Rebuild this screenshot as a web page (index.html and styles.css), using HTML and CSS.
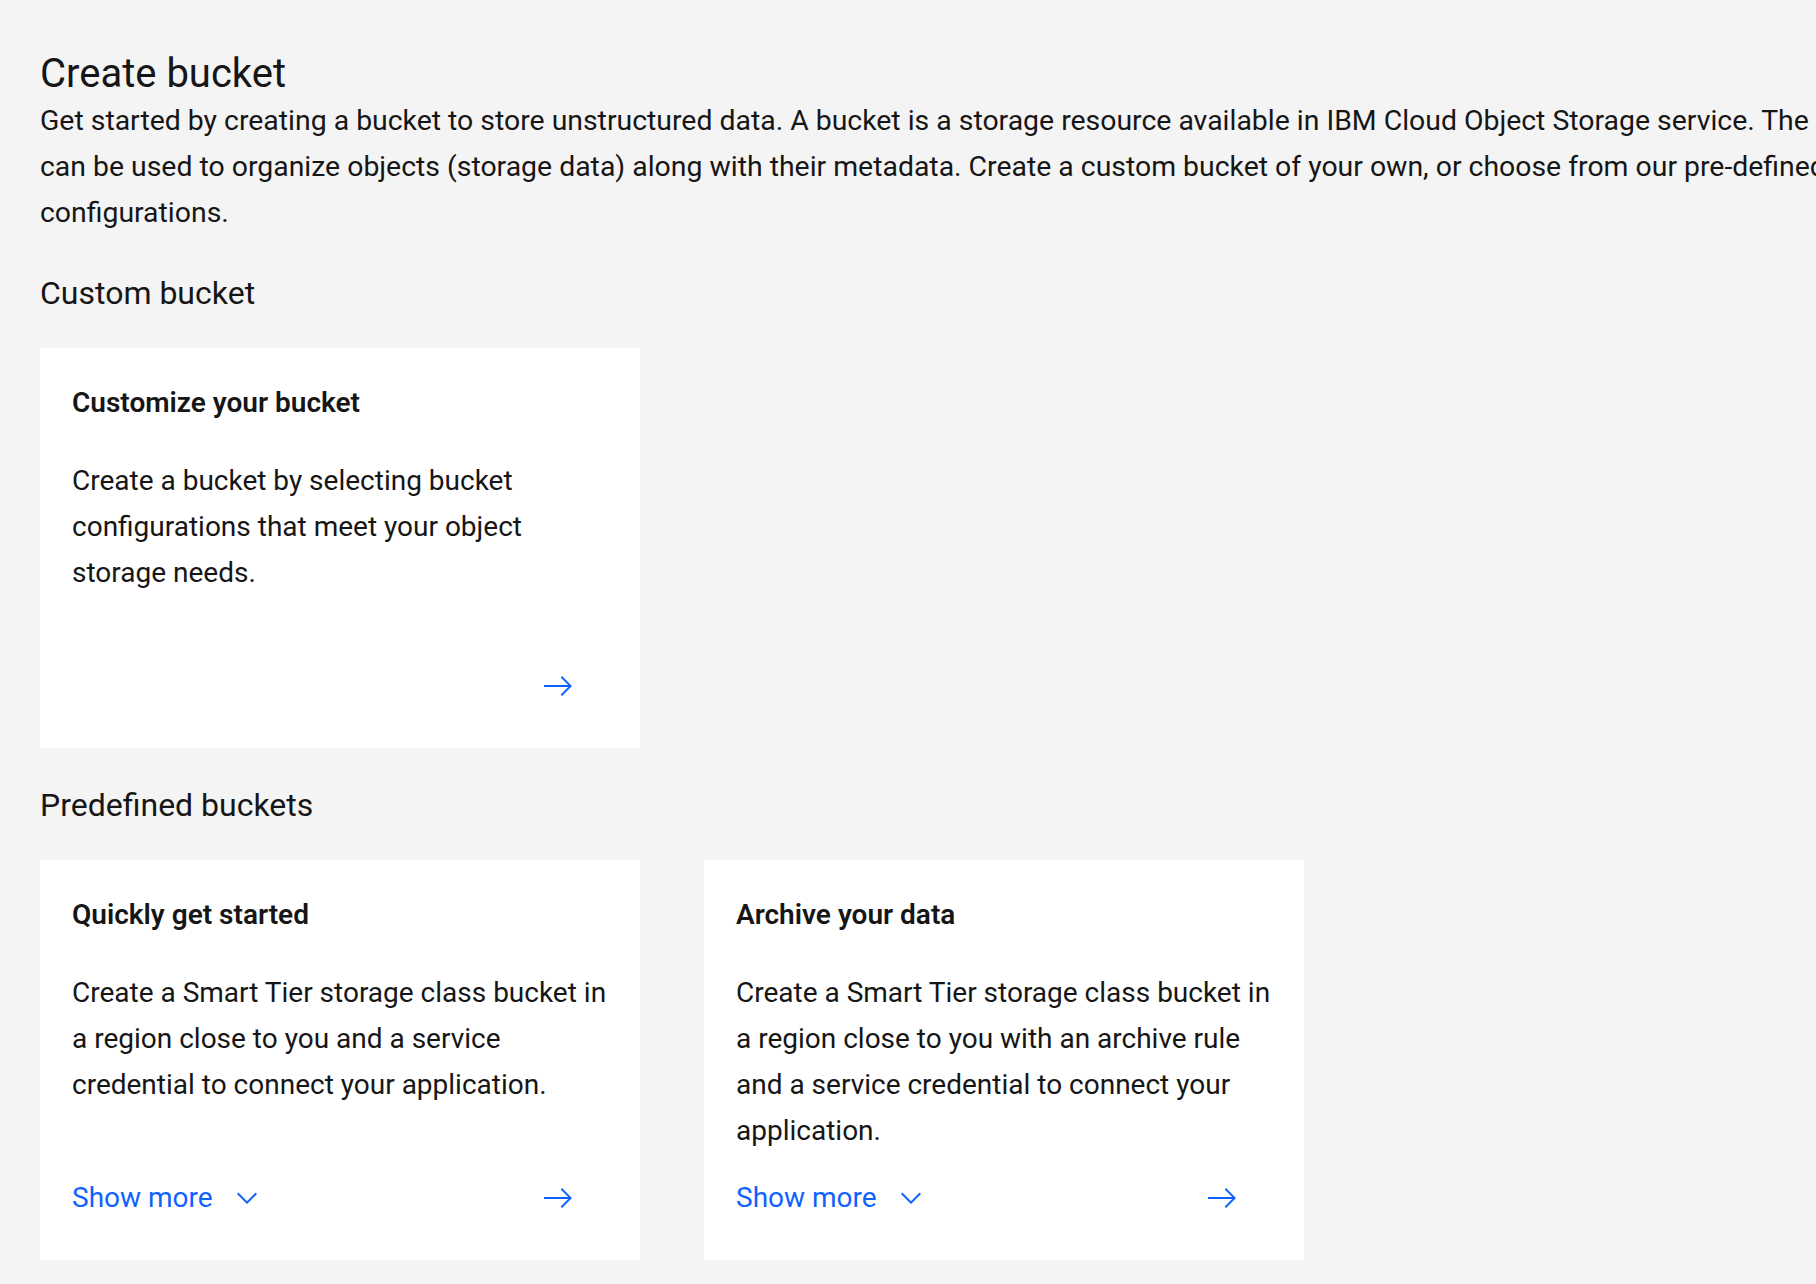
FILE: index.html
```html
<!DOCTYPE html>
<html lang="en">
<head>
<meta charset="utf-8">
<title>Create bucket</title>
<link rel="stylesheet" href="styles.css">
</head>
<body>
<main class="page">
  <h1 class="page-title">Create bucket</h1>
  <p class="page-intro">
    <span class="intro-line">Get started by creating a bucket to store unstructured data. A bucket is a storage resource available in IBM Cloud Object Storage service. The bucket</span>
    <span class="intro-line">can be used to organize objects (storage data) along with their metadata. Create a custom bucket of your own, or choose from our pre-defined bucket</span>
    <span class="intro-line">configurations.</span>
  </p>

  <h2 class="section-title">Custom bucket</h2>
  <div class="tile-grid">
    <section class="tile">
      <h3 class="tile-title">Customize your bucket</h3>
      <p class="tile-text">Create a bucket by selecting bucket configurations that meet your object storage needs.</p>
      <div class="tile-footer tile-footer--end">
        <svg class="icon-arrow" viewBox="0 0 16 16" width="32" height="32" aria-hidden="true"><path d="M9.3 3.7L13.1 7.5 1 7.5 1 8.5 13.1 8.5 9.3 12.3 10 13 15 8 10 3z"/></svg>
      </div>
    </section>
  </div>

  <h2 class="section-title section-title--second">Predefined buckets</h2>
  <div class="tile-grid">
    <section class="tile">
      <h3 class="tile-title">Quickly get started</h3>
      <p class="tile-text">Create a Smart Tier storage class bucket in a region close to you and a service credential to connect your application.</p>
      <div class="tile-footer">
        <span class="show-more">Show more
          <svg class="icon-chevron" viewBox="0 0 16 16" width="32" height="32" aria-hidden="true"><path d="M8 11L3 6 3.7 5.3 8 9.6 12.3 5.3 13 6z"/></svg>
        </span>
        <svg class="icon-arrow" viewBox="0 0 16 16" width="32" height="32" aria-hidden="true"><path d="M9.3 3.7L13.1 7.5 1 7.5 1 8.5 13.1 8.5 9.3 12.3 10 13 15 8 10 3z"/></svg>
      </div>
    </section>
    <section class="tile">
      <h3 class="tile-title">Archive your data</h3>
      <p class="tile-text">Create a Smart Tier storage class bucket in a region close to you with an archive rule and a service credential to connect your application.</p>
      <div class="tile-footer">
        <span class="show-more">Show more
          <svg class="icon-chevron" viewBox="0 0 16 16" width="32" height="32" aria-hidden="true"><path d="M8 11L3 6 3.7 5.3 8 9.6 12.3 5.3 13 6z"/></svg>
        </span>
        <svg class="icon-arrow" viewBox="0 0 16 16" width="32" height="32" aria-hidden="true"><path d="M9.3 3.7L13.1 7.5 1 7.5 1 8.5 13.1 8.5 9.3 12.3 10 13 15 8 10 3z"/></svg>
      </div>
    </section>
  </div>
</main>
</body>
</html>
```
FILE: styles.css
```css
html, body {
  margin: 0;
  padding: 0;
}

body {
  background: #f4f4f4;
  color: #161616;
  font-family: Roboto, "Liberation Sans", Arial, sans-serif;
  overflow: hidden;
  width: 1816px;
  height: 1284px;
}

.page {
  padding: 50px 0 0 40px;
}

.page-title {
  margin: 0;
  font-size: 40px;
  line-height: 48px;
  font-weight: 400;
}

.page-intro {
  margin: 0;
  font-size: 28.4px;
  line-height: 46px;
  font-weight: 400;
  white-space: nowrap;
}

.intro-line {
  display: block;
}

.section-title {
  margin: 37px 0 35px;
  font-size: 32px;
  line-height: 40px;
  font-weight: 400;
}

.section-title--second {
  margin-top: 37px;
}

.tile-grid {
  display: grid;
  grid-template-columns: 600px 600px;
  column-gap: 64px;
}

.tile {
  background: #ffffff;
  height: 400px;
  box-sizing: border-box;
  padding: 33px 24px 46px 32px;
  display: flex;
  flex-direction: column;
}

.tile-title {
  margin: 0;
  font-size: 28px;
  line-height: 44px;
  font-weight: 600;
}

.tile-text {
  margin: 33px 0 0;
  font-size: 28px;
  line-height: 46px;
  font-weight: 400;
}

.tile-footer {
  margin-top: auto;
  height: 32px;
  padding-right: 42px;
  display: flex;
  align-items: center;
  justify-content: space-between;
}

.tile-footer--end {
  justify-content: flex-end;
}

.show-more {
  display: inline-flex;
  align-items: center;
  gap: 18px;
  color: #0f62fe;
  font-size: 28px;
  line-height: 32px;
}

.icon-arrow,
.icon-chevron {
  display: block;
  fill: #0f62fe;
  flex: none;
}
```
